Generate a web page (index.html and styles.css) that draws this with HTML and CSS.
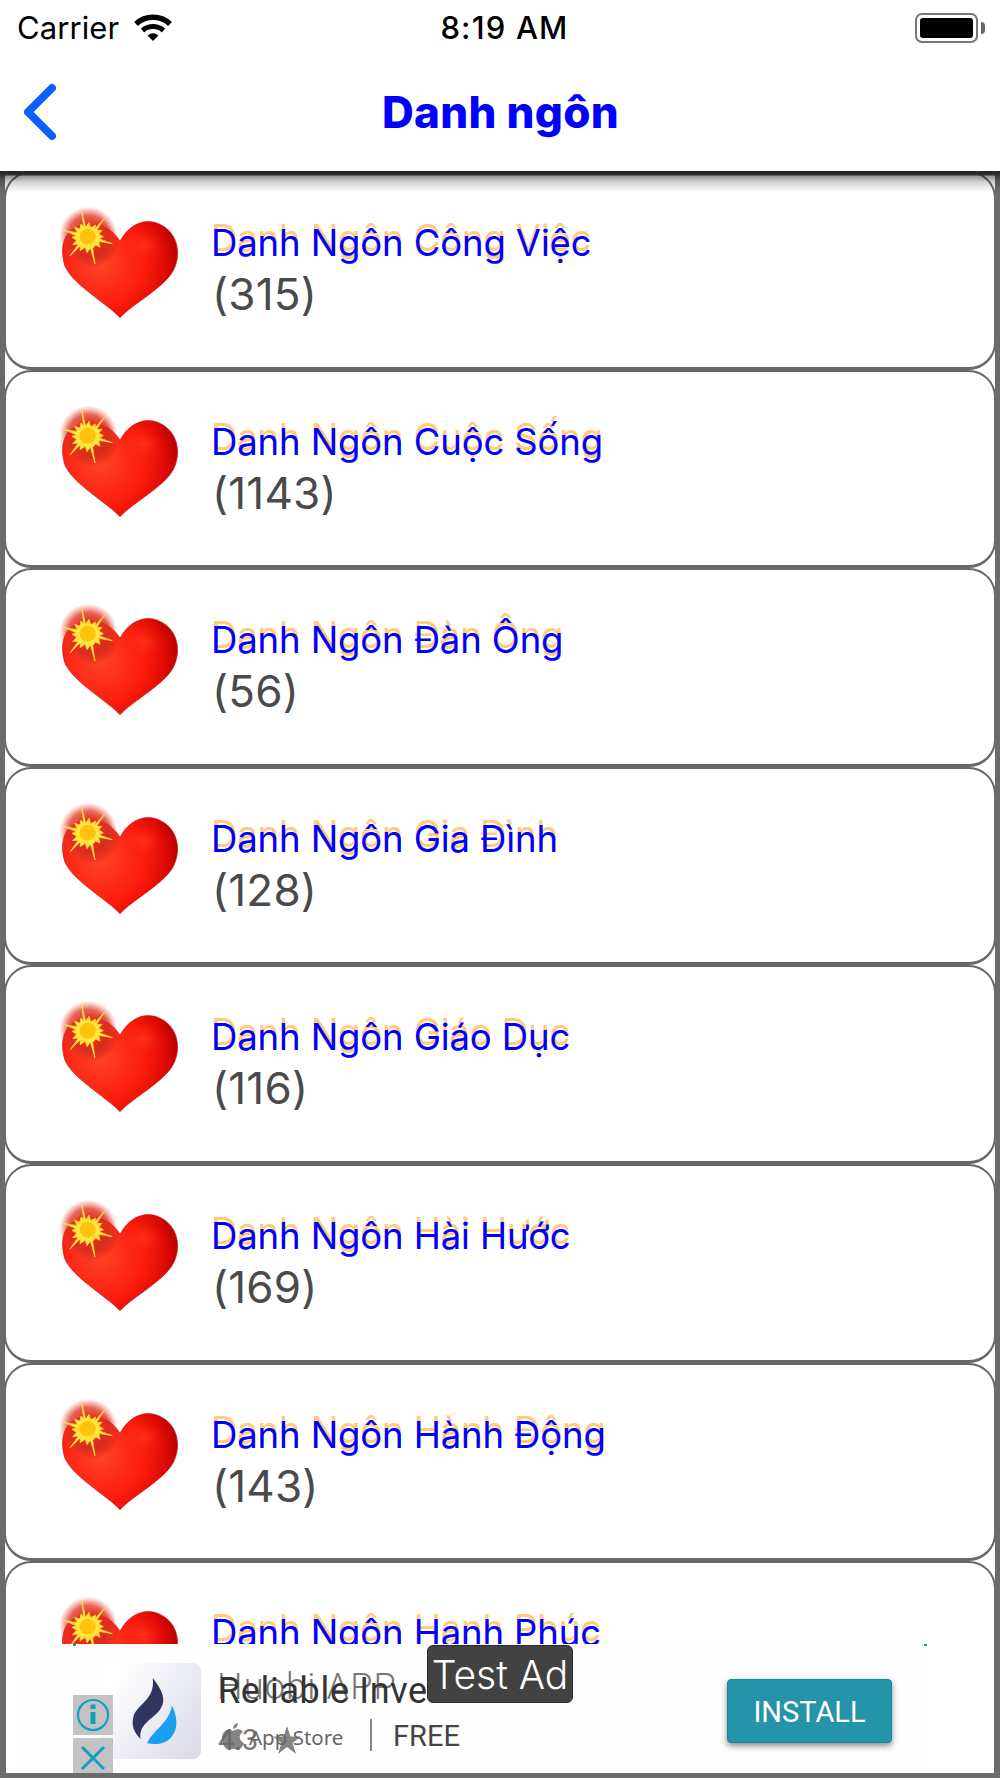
FILE: index.html
```html
<!DOCTYPE html>
<html lang="vi">
<head>
    <meta charset="UTF-8">
    <title>Danh ngôn</title>
    <link rel="stylesheet" href="styles.css">
</head>
<body>

    <div class="status-bar">
        <div class="carrier">
            <span class="carrier-name">Carrier</span>
            <svg class="wifi" width="38" height="28" viewBox="0 0 38 28">
                <path d="M2 10 A25 25 0 0 1 36 10" fill="none" stroke="#000" stroke-width="5.5"/>
                <path d="M8.5 16.5 A16 16 0 0 1 29.5 16.5" fill="none" stroke="#000" stroke-width="5"/>
                <path d="M13.5 21.5 Q19 17 24.5 21.5 L19 27 Z"/>
            </svg>
        </div>
        <div class="time">8:19 AM</div>
        <div class="battery">
            <div class="battery-case"><div class="battery-level"></div></div>
            <div class="battery-tip"></div>
        </div>
    </div>

    <div class="nav-bar">
        <svg class="back" width="34" height="58" viewBox="0 0 34 58">
            <path d="M29 5 L5 29 L29 53" fill="none" stroke="#0a60ff" stroke-width="8" stroke-linecap="round" stroke-linejoin="round"/>
        </svg>
        <h1>Danh ngôn</h1>
    </div>

    <div class="list" id="list"></div>

    <div class="ad">
        <div class="ad-logo">
            <svg width="100" height="96" viewBox="0 0 300 288">
                <path d="M155 45 C185 82 195 110 180 135 C165 165 110 180 119 228 C99 208 91 190 97 162 C105 125 165 110 155 45 Z" fill="#30355f"/>
                <path d="M213 128 C232 165 232 207 203 230 C188 243 160 246 139 241 C150 205 202 185 213 128 Z" fill="#189ff0"/>
            </svg>
        </div>
        <div class="ad-tools">
            <div class="ad-tool">
                <svg width="40" height="40" viewBox="0 0 40 40">
                    <circle cx="20" cy="20" r="15" fill="none" stroke="#12a0c0" stroke-width="2.2"/>
                    <path d="M17.5 9.5h5v4.5h-5z M17.5 17h5v12h-5z" fill="#12a0c0"/>
                </svg>
            </div>
            <div class="ad-tool">
                <svg width="40" height="40" viewBox="0 0 40 40">
                    <path d="M9 9 L31 31 M31 9 L9 31" stroke="#12a0c0" stroke-width="3"/>
                </svg>
            </div>
        </div>
        <span class="ad-name">Huobi APP</span>
        <span class="ad-headline">Reliable Inve</span>
        <span class="ad-rating">4.3</span>
        <svg class="ad-apple" width="24" height="28" viewBox="0 0 24 28">
            <path d="M12 8 C16 5 20 6 22 9 C17 12 18 18 23 20 C21 25 18 28 15 26.5 Q12 25 9 26.5 C5 28 1 21 1 15 C1 8 7 5 12 8 Z M12 6 Q12 1 17 0 Q17 5 12 6 Z"/>
        </svg>
        <span class="ad-store">App Store</span>
        <svg class="ad-star" width="28" height="28" viewBox="0 0 28 28">
            <path d="M14 0 L17.5 10.5 H28 L19.5 17 L23 28 L14 21 L5 28 L8.5 17 L0 10.5 H10.5 Z"/>
        </svg>
        <div class="ad-divider"></div>
        <span class="ad-price">FREE</span>
        <span class="ad-badge">Test Ad</span>
        <button class="install">INSTALL</button>
        <i class="ad-mark mark-left"></i>
        <i class="ad-mark mark-right"></i>
    </div>

    <!-- shared heart icon -->
    <svg width="0" height="0" class="defs">
        <defs>
            <radialGradient id="heartFill" gradientUnits="userSpaceOnUse" cx="150" cy="190" r="250">
                <stop offset="0" stop-color="#ff4427"/>
                <stop offset="0.55" stop-color="#fb1b0c"/>
                <stop offset="0.8" stop-color="#dc0905"/>
                <stop offset="1" stop-color="#a80000"/>
            </radialGradient>
            <radialGradient id="lobe">
                <stop offset="0" stop-color="#ff4024" stop-opacity="0.6"/>
                <stop offset="1" stop-color="#fb1b0c" stop-opacity="0"/>
            </radialGradient>
            <radialGradient id="shade">
                <stop offset="0.4" stop-color="#a81508" stop-opacity="0.85"/>
                <stop offset="1" stop-color="#c01a0a" stop-opacity="0"/>
            </radialGradient>
            <radialGradient id="glow">
                <stop offset="0.35" stop-color="#e8341c"/>
                <stop offset="0.7" stop-color="#e03020" stop-opacity="0.75"/>
                <stop offset="1" stop-color="#e84838" stop-opacity="0"/>
            </radialGradient>
            <symbol id="heart" viewBox="0 0 420 390">
                <path d="M210 353 C170 310 70 255 45 199 C30 150 38 105 72 85 C130 60 180 75 210 124 C235 75 285 50 332 74 C385 100 395 165 369 213 C340 265 250 310 210 353 Z" fill="url(#heartFill)" stroke="#c51212" stroke-width="2"/>
                <ellipse cx="280" cy="135" rx="65" ry="55" fill="url(#lobe)"/>
                <circle cx="128" cy="128" r="76" fill="url(#shade)"/>
                <circle cx="115" cy="107" r="87" fill="url(#glow)"/>
                <path d="M95 32 L107 82 L117 67 L122 83 L137 75 L135 86 L164 54 L140 91 L156 91 L146 102 L160 110 L147 116 L187 131 L146 124 L150 142 L137 135 L128 145 L135 192 L121 144 L111 158 L106 142 L90 152 L91 137 L60 168 L85 132 L68 134 L80 121 L66 112 L79 107 L40 91 L82 98 L74 82 L90 87 L93 72 L101 82 Z" fill="#ffe53c" stroke="#ffe53c" stroke-width="2"/>
                <circle cx="113" cy="110" r="24" fill="#ffc20d"/>
            </symbol>
        </defs>
    </svg>

    <script>
        const list = document.getElementById('list');

        const categories = [
            ["Danh Ngôn Công Việc", 315],
            ["Danh Ngôn Cuộc Sống", 1143],
            ["Danh Ngôn Đàn Ông", 56],
            ["Danh Ngôn Gia Đình", 128],
            ["Danh Ngôn Giáo Dục", 116],
            ["Danh Ngôn Hài Hước", 169],
            ["Danh Ngôn Hành Động", 143],
            ["Danh Ngôn Hạnh Phúc", ""]
        ];

        categories.forEach(([name, count]) => {
            const row = document.createElement('div');
            row.className = 'row';
            row.innerHTML = `
                <svg class="heart"><use href="#heart"/></svg>
                <div class="info">
                    <div class="name">${name}</div>
                    <div class="count">${count ? `(${count})` : ''}</div>
                </div>`;
            list.appendChild(row);
        });
    </script>

</body>
</html>
```

FILE: styles.css
```css
* {
    box-sizing: border-box;
}

body {
    margin: 0;
    width: 1000px;
    height: 1778px;
    position: relative;
    overflow: hidden;
    display: flex;
    flex-direction: column;
    font-family: Inter, "Noto Sans", sans-serif;
    background-color: #fff;
}

.defs {
    position: absolute;
}

.status-bar {
    height: 55px;
    padding: 1px 15px 0 17px;
    display: grid;
    grid-template-columns: 1fr auto 1fr;
    align-items: center;
    font-size: 31px;
    line-height: 54px;
}

.carrier {
    display: flex;
    align-items: center;
    gap: 15px;
    letter-spacing: 0.1px;
}

.time {
    font-weight: 500;
    letter-spacing: 1.2px;
    padding-left: 7px;
}

.battery {
    display: flex;
    align-items: center;
    justify-content: flex-end;
    gap: 3px;
}

.battery-case {
    width: 63px;
    height: 30px;
    padding: 3px;
    border: 2px solid #777;
    border-radius: 7px;
}

.battery-level {
    height: 20px;
    background-color: #000;
    border-radius: 3px;
}

.battery-tip {
    width: 4px;
    height: 12px;
    background-color: #666;
    border-radius: 0 6px 6px 0;
}

.nav-bar {
    height: 116px;
    padding: 0 23px;
    display: grid;
    grid-template-columns: 1fr auto 1fr;
    align-items: start;
    position: relative;
    z-index: 1;
}

/* dark edge and shadow under the nav bar */
.nav-bar::after {
    content: "";
    position: absolute;
    left: 0;
    right: 0;
    top: 100%;
    height: 21px;
    background: linear-gradient(#242424 0, #303030 4px, rgba(0, 0, 0, 0.42) 5px, rgba(0, 0, 0, 0.18) 11px, rgba(0, 0, 0, 0));
}

.back {
    margin-top: 28px;
}

h1 {
    margin: 31px 0 0;
    padding-left: 1px;
    font-size: 44px;
    line-height: 52px;
    font-weight: 800;
    letter-spacing: 0.3px;
    color: #0000ff;
}

.list {
    flex: 1;
    min-height: 0;
    overflow: hidden;
    border: 5px solid #6b6b6b;
    border-top: 0;
}

.row {
    height: 198.6px;
    margin: 0 -1px;
    padding: 28px 0 0 44px;
    display: flex;
    border: 2px solid #686868;
    border-bottom-width: 3px;
    border-radius: 27px;
}

.row:last-child {
    height: 260px;
}

.heart {
    width: 140px;
    height: 130px;
    flex: none;
    margin-top: -1px;
}

.info {
    padding: 18px 0 0 21px;
}

.name {
    font-size: 36.5px;
    line-height: 48px;
    letter-spacing: -0.12px;
    color: #0000ff;
    text-shadow: 0 -5px 0 #ffcb7d;
}

.count {
    padding: 0 0 0 1px;
    font-size: 44px;
    line-height: 55px;
    letter-spacing: 0.2px;
    color: #4a4a4a;
}

/* banner sits over the end of the list */
.ad {
    position: absolute;
    left: 73px;
    bottom: 5px;
    width: 854px;
    height: 129px;
    background-color: #fefefe;
    box-shadow: -60px 0 0 #fefefe;
    font-family: Roboto, sans-serif;
    color: #444;
}

.ad > * {
    position: absolute;
    white-space: nowrap;
    line-height: 1;
}

.ad-logo {
    left: 28px;
    top: 19px;
    width: 100px;
    height: 96px;
    border-radius: 0 8px 8px 0;
    background: linear-gradient(125deg, #fff 15%, #eeeef6 50%, #d9d9e7);
}

.ad-tools {
    left: 0;
    top: 51px;
    height: 78px;
    overflow: hidden;
    display: flex;
    flex-direction: column;
    gap: 3px;
}

.ad-tool {
    width: 40px;
    height: 40px;
    flex: none;
    background-color: #c3c3c3;
}

.ad-name {
    left: 144px;
    top: 25px;
    font-size: 36px;
    font-weight: 300;
    letter-spacing: 1.2px;
    color: #777;
}

.ad-headline {
    left: 145px;
    top: 29px;
    font-size: 36px;
    letter-spacing: 0.65px;
    color: #333;
}

.ad-rating {
    left: 145px;
    top: 82px;
    font-size: 29px;
    color: #777;
}

.ad-apple {
    left: 148px;
    top: 79px;
    fill: #666;
    opacity: 0.8;
}

.ad-store {
    left: 176px;
    top: 83px;
    font-family: "Noto Sans", sans-serif;
    font-size: 20.5px;
    color: #666;
}

.ad-star {
    left: 200px;
    top: 82px;
    fill: #666;
    opacity: 0.8;
}

.ad-divider {
    left: 297px;
    top: 75px;
    width: 2px;
    height: 32px;
    background-color: #888;
}

.ad-price {
    left: 320px;
    top: 78px;
    font-size: 29px;
}

.ad-badge {
    left: 354px;
    top: 1px;
    width: 146px;
    height: 58px;
    border: 1px solid #2c2c2c;
    border-radius: 6px;
    background-color: #424242;
    color: #fff;
    font-family: Inter, sans-serif;
    font-size: 39px;
    font-weight: 300;
    text-align: center;
    line-height: 58px;
}

.install {
    left: 654px;
    top: 35px;
    width: 165px;
    height: 64px;
    padding: 3px 0 0;
    border: 1px solid #128a9c;
    border-radius: 4px;
    background-color: #2593a8;
    color: #fff;
    font-family: Roboto, sans-serif;
    font-size: 29px;
    box-shadow: 0 3px 6px rgba(0, 0, 0, 0.45);
}

.ad-mark {
    top: 0;
    width: 3px;
    height: 2px;
    background-color: #2593a8;
}

.mark-left {
    left: 0;
}

.mark-right {
    right: 0;
}
```
